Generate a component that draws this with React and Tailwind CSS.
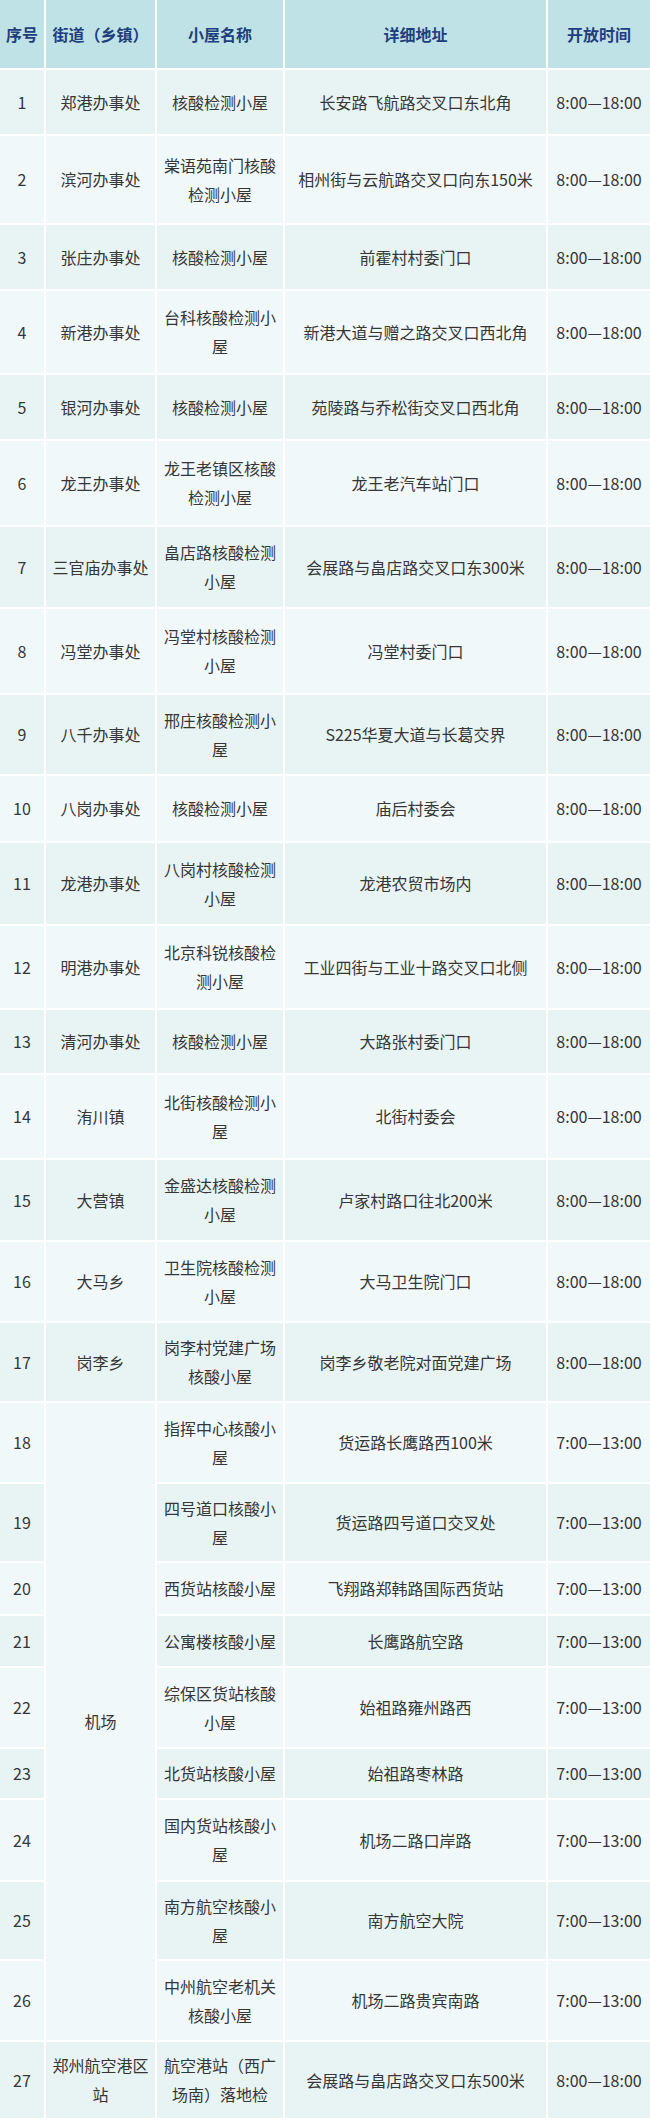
const rows = [
  { no: 1, street: '郑港办事处', name: '核酸检测小屋', addr: '长安路飞航路交叉口东北角', time: '8:00—18:00', h: 'h-[64px]' },
  { no: 2, street: '滨河办事处', name: '棠语苑南门核酸检测小屋', addr: '相州街与云航路交叉口向东150米', time: '8:00—18:00', h: 'h-[87px]' },
  { no: 3, street: '张庄办事处', name: '核酸检测小屋', addr: '前霍村村委门口', time: '8:00—18:00', h: 'h-[64px]' },
  { no: 4, street: '新港办事处', name: '台科核酸检测小屋', addr: '新港大道与赠之路交叉口西北角', time: '8:00—18:00', h: 'h-[82px]' },
  { no: 5, street: '银河办事处', name: '核酸检测小屋', addr: '苑陵路与乔松街交叉口西北角', time: '8:00—18:00', h: 'h-[64px]' },
  { no: 6, street: '龙王办事处', name: '龙王老镇区核酸检测小屋', addr: '龙王老汽车站门口', time: '8:00—18:00', h: 'h-[84px]' },
  { no: 7, street: '三官庙办事处', name: '畠店路核酸检测小屋', addr: '会展路与畠店路交叉口东300米', time: '8:00—18:00', h: 'h-[80px]' },
  { no: 8, street: '冯堂办事处', name: '冯堂村核酸检测小屋', addr: '冯堂村委门口', time: '8:00—18:00', h: 'h-[84px]' },
  { no: 9, street: '八千办事处', name: '邢庄核酸检测小屋', addr: 'S225华夏大道与长葛交界', time: '8:00—18:00', h: 'h-[79px]' },
  { no: 10, street: '八岗办事处', name: '核酸检测小屋', addr: '庙后村委会', time: '8:00—18:00', h: 'h-[65px]' },
  { no: 11, street: '龙港办事处', name: '八岗村核酸检测小屋', addr: '龙港农贸市场内', time: '8:00—18:00', h: 'h-[81px]' },
  { no: 12, street: '明港办事处', name: '北京科锐核酸检测小屋', addr: '工业四街与工业十路交叉口北侧', time: '8:00—18:00', h: 'h-[82px]' },
  { no: 13, street: '清河办事处', name: '核酸检测小屋', addr: '大路张村委门口', time: '8:00—18:00', h: 'h-[63px]' },
  { no: 14, street: '洧川镇', name: '北街核酸检测小屋', addr: '北街村委会', time: '8:00—18:00', h: 'h-[83px]' },
  { no: 15, street: '大营镇', name: '金盛达核酸检测小屋', addr: '卢家村路口往北200米', time: '8:00—18:00', h: 'h-[80px]' },
  { no: 16, street: '大马乡', name: '卫生院核酸检测小屋', addr: '大马卫生院门口', time: '8:00—18:00', h: 'h-[79px]' },
  { no: 17, street: '岗李乡', name: '岗李村党建广场核酸小屋', addr: '岗李乡敬老院对面党建广场', time: '8:00—18:00', h: 'h-[78px]' },
  { no: 18, street: '机场', span: 9, name: '指挥中心核酸小屋', addr: '货运路长鹰路西100米', time: '7:00—13:00', h: 'h-[79px]' },
  { no: 19, name: '四号道口核酸小屋', addr: '货运路四号道口交叉处', time: '7:00—13:00', h: 'h-[77px]' },
  { no: 20, name: '西货站核酸小屋', addr: '飞翔路郑韩路国际西货站', time: '7:00—13:00', h: 'h-[51px]' },
  { no: 21, name: '公寓楼核酸小屋', addr: '长鹰路航空路', time: '7:00—13:00', h: 'h-[50px]' },
  { no: 22, name: '综保区货站核酸小屋', addr: '始祖路雍州路西', time: '7:00—13:00', h: 'h-[79px]' },
  { no: 23, name: '北货站核酸小屋', addr: '始祖路枣林路', time: '7:00—13:00', h: 'h-[49px]' },
  { no: 24, name: '国内货站核酸小屋', addr: '机场二路口岸路', time: '7:00—13:00', h: 'h-[80px]' },
  { no: 25, name: '南方航空核酸小屋', addr: '南方航空大院', time: '7:00—13:00', h: 'h-[77px]' },
  { no: 26, name: '中州航空老机关核酸小屋', addr: '机场二路贵宾南路', time: '7:00—13:00', h: 'h-[79px]' },
  { no: 27, street: '郑州航空港区站', name: '航空港站（西广场南）落地检', addr: '会展路与畠店路交叉口东500米', time: '8:00—18:00', h: 'h-[76px]' },
]

const headers = ['序号', '街道（乡镇）', '小屋名称', '详细地址', '开放时间']

export default function App() {
  return (
    <div className="w-[650px] h-[2122px] overflow-hidden bg-white" style={{ fontFamily: '"Noto Sans CJK SC", "Noto Sans", sans-serif' }}>
      <table className="table-fixed border-separate border-spacing-[2px] w-[654px] -m-[2px] text-[16px] leading-[29px] text-[#363636] text-center">
        <colgroup>
          <col className="w-[44px]" />
          <col className="w-[109px]" />
          <col className="w-[126px]" />
          <col className="w-[261px]" />
          <col className="w-[102px]" />
        </colgroup>
        <thead>
          <tr>
            {headers.map((t) => (
              <th key={t} className="h-[68px] p-0 bg-[#bee2e6] text-[#1f3f7c] font-bold text-[16px] whitespace-nowrap">
                {t}
              </th>
            ))}
          </tr>
        </thead>
        <tbody>
          {rows.map((r) => {
            const bg = r.no % 2 === 1 ? 'bg-[#e8f4f4]' : 'bg-[#f1f8fa]'
            return (
              <tr key={r.no}>
                <td className={`${r.h} ${bg} p-0`}>{r.no}</td>
                {r.street && (
                  <td
                    rowSpan={r.span || 1}
                    className={`${r.span ? 'bg-[#f1f8fa]' : bg} px-[3px] py-0`}
                  >
                    {r.street}
                  </td>
                )}
                <td className={`${bg} px-[6px] py-0`}>{r.name}</td>
                <td className={`${bg} px-[4px] py-0`}>{r.addr}</td>
                <td className={`${bg} p-0 whitespace-nowrap`}>{r.time}</td>
              </tr>
            )
          })}
        </tbody>
      </table>
    </div>
  )
}
